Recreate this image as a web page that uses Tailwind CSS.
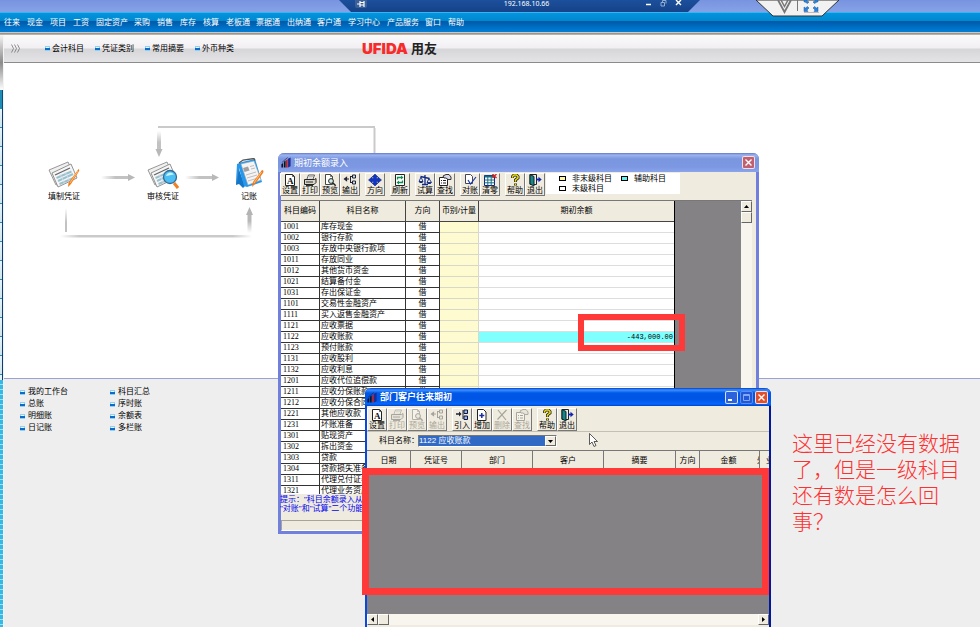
<!DOCTYPE html>
<html lang="zh-CN">
<head>
<meta charset="utf-8">
<title>UFIDA 用友 - 期初余额录入</title>
<script src="https://cdn.jsdelivr.net/npm/@tailwindcss/browser@4"></script>
</head>
<body class="font-['Liberation_Sans','Noto_Sans_CJK_SC',sans-serif] text-[8px] leading-[10px] text-black">
<svg class="absolute size-0" aria-hidden="true">
  <defs>
    <symbol id="i-set" viewBox="0 0 14 12"><path d="M2.500 .5h7l2 2v9h-9z" fill="#fff" stroke="#222"/><path d="M9.500 .5v2h2" fill="none" stroke="#222" stroke-width=".7"/><text x="4" y="10" font-family="Liberation Serif" font-weight="bold" font-size="9" fill="#111">A</text></symbol>
    <symbol id="i-print" viewBox="0 0 14 12"><path d="M4 5l1.500-4h6L10 5" fill="#fff" stroke="#333" stroke-width=".8"/><path d="M1.500 5.500h10l1.500-1v4l-2 2h-9.500z" fill="#d8d4c8" stroke="#222"/><path d="M3 8h7M3 11.500h7" stroke="#333"/><path d="M6 2.500h4M5.500 4h4" stroke="#888" stroke-width=".6"/></symbol>
    <symbol id="i-view" viewBox="0 0 14 12"><path d="M2.500 .5h5l2 2v8h-7z" fill="#fff" stroke="#333" stroke-width=".9"/><path d="M7.500 .5v2h2" fill="none" stroke="#333" stroke-width=".7"/><circle cx="8" cy="7" r="2.400" fill="#cdeee8" stroke="#222"/><path d="M9.700 8.700l3 3" stroke="#222" stroke-width="1.500"/></symbol>
    <symbol id="i-out" viewBox="0 0 14 12"><path d="M1 5h5M1.500 5l2-1.500v3z" fill="#223" stroke="#223" stroke-width="1.200"/><path d="M7.500 2v7M7 2.500h2M7 8.500h2" stroke="#223"/><path d="M9.500 1h3v3h-3zM9.500 7h3v3h-3z" fill="#cde" stroke="#223"/></symbol>
    <symbol id="i-dir" viewBox="0 0 14 12"><path d="M7 0l3 3H8.500v1.500H10V3l3.500 3L10 9V7.500H8.500V9H10l-3 3-3-3h1.500V7.500H4V9L.5 6 4 3v1.500h1.500V3H4z" fill="#1036c8" stroke="#0a1c70" stroke-width=".5"/></symbol>
    <symbol id="i-ref" viewBox="0 0 14 12"><path d="M2.500 .5h9v11h-9z" fill="#fff" stroke="#222"/><path d="M4.500 5.500V3.500h4M9.500 6.500v2h-4" fill="none" stroke="#0a9050" stroke-width="1.300"/><path d="M8 1.500l2.500 2L8 5.500zM6 6.500l-2.500 2 2.500 2z" fill="#0a9050"/></symbol>
    <symbol id="i-bal" viewBox="0 0 14 12"><path d="M7 1v9M2.500 2.500l9 2M4 10.500h6" stroke="#102a88" stroke-width="1.300"/><path d="M3 3L1 7.500h4zM11 4.500l-2 4h4.500z" fill="none" stroke="#102a88" stroke-width=".9"/><path d="M.8 7.500h4.500l-1 1.500h-2.500zM8.800 8.500h4.700l-1 1.500h-2.700z" fill="#102a88"/></symbol>
    <symbol id="i-find" viewBox="0 0 14 12"><path d="M1.500 3.500h8v8h-8z" fill="#fff" stroke="#222"/><path d="M3 6.500h1M5 6.500h3M3 9h1M5 9h3" stroke="#222"/><path d="M5 2l3-1.500h3L13 3v2.500h-3L8 4H6z" fill="#d8d8e8" stroke="#222" stroke-width=".9"/></symbol>
    <symbol id="i-chk" viewBox="0 0 14 12"><path d="M2.500 .5h5l2 2v7h-7z" fill="#fff" stroke="#445"/><path d="M5 6l2.500 4L13 3" fill="none" stroke="#1d3aa8" stroke-width="1.200"/></symbol>
    <symbol id="i-zero" viewBox="0 0 14 12"><path d="M1.500 1.500h10v10h-10z" fill="#fff" stroke="#127"/><path d="M1.500 2.500h10" stroke="#146f86" stroke-width="2"/><path d="M1.500 6h10M1.500 8.800h10M4.800 3v8.500M8.200 3v8.500" stroke="#146f86" stroke-width="1"/><path d="M9.500 0l4 4M13.500 0l-4 4" stroke="#e02020" stroke-width="1.300"/></symbol>
    <symbol id="i-help" viewBox="0 0 14 12"><path d="M4.500 4V2.500L6 1h2.500L10 2.500V4L7.500 6v2M7.500 9.500v2" fill="none" stroke="#222" stroke-width="3"/><path d="M4.500 3.700V2.500L6 1h2.500L10 2.500V4L7.500 6v1.700M7.500 9.800v1.400" fill="none" stroke="#f0e000" stroke-width="1.500"/></symbol>
    <symbol id="i-exit" viewBox="0 0 14 12"><path d="M2 .5h6.500v10H2z" fill="#eee" stroke="#222"/><path d="M2 .5l4 2v9.500l-4-2z" fill="#16868a" stroke="#122"/><path d="M8 5.500h3" stroke="#1024b0" stroke-width="1.800"/><path d="M10.500 2.800l3.200 2.700-3.200 2.700z" fill="#1024b0"/></symbol>
    <symbol id="i-in" viewBox="0 0 14 12"><path d="M1 5h4" stroke="#223" stroke-width="1.500"/><path d="M4 2.500L6.500 5 4 7.500z" fill="#223"/><path d="M8 1v9" stroke="#223"/><path d="M9 1h3.500v3.500H9zM9 7h3.500v3.500H9z" fill="#9bd" stroke="#114"/></symbol>
    <symbol id="i-add" viewBox="0 0 14 12"><path d="M2.500 .5h6l2.500 2.500v8.500h-8.500z" fill="#fff" stroke="#222"/><path d="M6.800 4v5M4.300 6.500h5" stroke="#1a2ea0" stroke-width="1.500"/></symbol>
    <symbol id="i-del" viewBox="0 0 14 12"><path d="M3 1l8 10M11.500 1L2.500 10.500" stroke="#222" stroke-width="1.200"/></symbol>
    <symbol id="i-app" viewBox="0 0 12 12"><path d="M.5 8l2-1.500V12h-2zM3.500 5l2-1.500V12h-2z" fill="#111"/><path d="M6 3.500L8 2v10H6z" fill="#b02430"/><path d="M8.500 1.500L11.500 0v10.500l-3 1.500z" fill="#1d2a90"/><path d="M1 6l7-6" stroke="#223" stroke-width=".7"/></symbol>
    <symbol id="i-bul" viewBox="0 0 5 5"><path d="M0 0h5v5H0z" fill="#8fd0f4"/><path d="M0 2h5v2H0z" fill="#0a6cc4"/><path d="M1 1h3v1H1z" fill="#e8f8ff"/></symbol>
    <linearGradient id="gr" x1="0" x2="1"><stop offset="0" stop-color="#c2c2c2" stop-opacity="0"/><stop offset=".5" stop-color="#c2c2c2"/></linearGradient>
    <linearGradient id="gd" x1="0" x2="0" y1="0" y2="1"><stop offset="0" stop-color="#c2c2c2" stop-opacity="0"/><stop offset=".6" stop-color="#c2c2c2"/></linearGradient>
    <linearGradient id="gu" x1="0" x2="0" y1="1" y2="0"><stop offset="0" stop-color="#c2c2c2" stop-opacity="0"/><stop offset=".6" stop-color="#b8b8b8"/></linearGradient>
    <linearGradient id="ge" x1="0" x2="1"><stop offset="0" stop-color="#c8c8c8" stop-opacity="0"/><stop offset=".1" stop-color="#cacaca"/><stop offset=".9" stop-color="#cacaca"/><stop offset="1" stop-color="#c8c8c8" stop-opacity="0"/></linearGradient>
    <symbol id="n-paper" viewBox="0 0 32 28"><path d="M1 9L20 1l7 15-19 8z" fill="#f0f0f0" stroke="#8c8c8c" stroke-width=".9"/><path d="M4 12L23 3l6 14-19 9z" fill="#f6f6f6" stroke="#888" stroke-width=".9"/><path d="M7 14l15-7" stroke="#666" stroke-width="1.300"/><path d="M8.500 17l15-6.500M10 20l15-7M11.500 23l14-6" stroke="#9ac2ce" stroke-width="2"/><path d="M12 13l4.500 9M17 11l4.500 9" stroke="#dde" stroke-width=".8"/></symbol>
  </defs>
</svg>

<div class="relative flex h-screen flex-col overflow-hidden bg-white">
  <header class="h-3 shrink-0 bg-linear-to-b from-[#7894e0] to-[#86a2e6]"></header>

  <nav class="flex h-5 shrink-0 items-center border-t border-[#3ab4ec] bg-[linear-gradient(#0494e0_0,#0088cc_8px,#0058a8_8px,#0080d8_19px)] pl-1 text-white">
    <a href="#" class="w-[23px]">往来</a><a href="#" class="w-[23px]">现金</a><a href="#" class="w-[23px]">项目</a><a href="#" class="w-[23px]">工资</a><a href="#" class="w-[38px]">固定资产</a><a href="#" class="w-[23px]">采购</a><a href="#" class="w-[23px]">销售</a><a href="#" class="w-[23px]">库存</a><a href="#" class="w-[23px]">核算</a><a href="#" class="w-[30px]">老板通</a><a href="#" class="w-[31px]">票据通</a><a href="#" class="w-[30px]">出纳通</a><a href="#" class="w-[31px]">客户通</a><a href="#" class="w-[39px]">学习中心</a><a href="#" class="w-[38px]">产品服务</a><a href="#" class="w-[23px]">窗口</a><a href="#" class="w-[23px]">帮助</a>
  </nav>
  <div class="h-[3px] shrink-0 border-t border-[#c8c8c8] bg-linear-to-b from-[#8a8680] to-[#c8c0b4]"></div>

  <div class="flex min-h-0 flex-1">
    <aside class="flex w-1 shrink-0 flex-col border-r border-[#f4f4f4]">
      <div class="h-[55px] bg-linear-to-b from-[#f4f4f4] via-[#8c8c8c] to-white"></div>
      <div class="h-[19px] border-r border-[#0a4a80] bg-[#1f8cb4]"></div>
      <div class="h-[271px] border-r border-[#0a3c78] bg-[repeating-linear-gradient(#e4f4fa_0,#cfe4ea_18px,#2d86b8_18px,#2d86b8_19px)]"></div>
      <div class="flex-1 bg-[repeating-linear-gradient(#38b8e4_0,#38b8e4_4px,#98e4f8_4px,#98e4f8_5px)]"></div>
    </aside>

    <div class="flex min-w-0 flex-1 flex-col">
      <div class="flex h-7 shrink-0 items-center border-b border-[#8c8c8c] bg-[linear-gradient(#fafafa_0,#f2eff3_13px,#d6d5d7_14px,#e4e3e6_27px)]">
        <svg class="ml-[7px] h-[9px] w-[9px]" viewBox="0 0 9 9" fill="none" stroke="#777" stroke-width=".8"><path d="M.5 .5l2 4-2 4M3.500 .5l2 4-2 4M6.500 .5l2 4-2 4"/></svg>
        <div class="ml-[25px] flex">
          <a href="#" class="flex w-[50px] items-center gap-[2px] whitespace-nowrap"><svg class="h-[5px] w-[5px]"><use href="#i-bul"/></svg>会计科目</a>
          <a href="#" class="flex w-[50px] items-center gap-[2px] whitespace-nowrap"><svg class="h-[5px] w-[5px]"><use href="#i-bul"/></svg>凭证类别</a>
          <a href="#" class="flex w-[50px] items-center gap-[2px] whitespace-nowrap"><svg class="h-[5px] w-[5px]"><use href="#i-bul"/></svg>常用摘要</a>
          <a href="#" class="flex w-[50px] items-center gap-[2px] whitespace-nowrap"><svg class="h-[5px] w-[5px]"><use href="#i-bul"/></svg>外币种类</a>
        </div>
        <div class="ml-[117px] flex items-center gap-[3px] text-[#222]"><span class="font-['Inter',sans-serif] text-[15px] font-black text-[#f82a2a]">UFIDA</span><span class="text-[13px] font-bold">用友</span></div>
      </div>

      <section class="relative h-[315px] shrink-0 bg-white">
        <svg class="absolute top-0 left-0 h-[315px] w-[400px]" viewBox="4 63 400 315">
          <path d="M158 126h217v2H158z" fill="#cacaca"/><path d="M373.500 128h2v26h-2z" fill="#cacaca"/>
          <path d="M157 131h4v19h-4z" fill="url(#gd)"/><path d="M155.500 149h7l-3.500 8z" fill="#b8b8b8"/>
          <path d="M101 176h29v3h-29z" fill="url(#gr)"/><path d="M128 174l7 3.500-7 3.500z" fill="#b8b8b8"/>
          <path d="M185 176h29v3h-29z" fill="url(#gr)"/><path d="M212 174l7 3.500-7 3.500z" fill="#b8b8b8"/>
          <path d="M65 208h2v24h-2z" fill="url(#gd)"/><path d="M60 235h192v2.500H60z" fill="url(#ge)"/>
          <path d="M247.500 213h4v20h-4z" fill="url(#gu)"/><path d="M246 215h7l-3.500-8z" fill="#b4b4b4"/>
        </svg>
        <button class="absolute top-[98px] left-[40px] flex w-10 flex-col items-center whitespace-nowrap">
          <svg class="h-7 w-8" viewBox="0 0 32 28"><use href="#n-paper"/><path d="M30.500 8c1 1 1 1.500 0 3L23 23l-3 3 .5-4z" fill="#f47a18"/><path d="M30 10l-8 12" stroke="#ffc070"/></svg>
          <span class="mt-[3px]">填制凭证</span></button>
        <button class="absolute top-[98px] left-[139px] flex w-10 flex-col items-center whitespace-nowrap">
          <svg class="h-7 w-8" viewBox="0 0 32 28"><use href="#n-paper"/><path d="M27 22l4 5" stroke="#f08020" stroke-width="3"/><circle cx="23" cy="16" r="6.500" fill="#4cc0f4" stroke="#336a94" stroke-width="1.300"/><path d="M19 15c1-4 6-5 8-1-3-1-5 1-8 1z" fill="#c8f2ff"/></svg>
          <span class="mt-[3px]">审核凭证</span></button>
        <button class="absolute top-[95px] left-[225px] flex w-10 flex-col items-center whitespace-nowrap">
          <svg class="h-[31px] w-8" viewBox="0 0 32 31"><path d="M4 6L3 27l3-1 4 4 2-2z" fill="#1476c8"/><path d="M4 6L9 4l13-3 1 3 6 20-15 5-3-1L6 10 4 24z" fill="#2498ec"/><path d="M8 6l13-3 7 19-13 5z" fill="#f4f4f4" stroke="#aaa" stroke-width=".6"/><path d="M10 10l5-1.500 1.500 4-5 1.500z" fill="#a0a0a0"/><path d="M17 8.500l4-1M18 11l4-1M13 17l10-3M14 20l10-3M15 23l10-3" stroke="#b8b8b8" stroke-width=".9"/><path d="M6 5l4-3 11-1.500 1 2" fill="none" stroke="#555" stroke-width="1.300"/><path d="M29 12c2 .5 1.500 2 1 3l-8 11-3 3 1-5z" fill="#f47a18"/><path d="M28.500 14L21 25" stroke="#ffc070"/></svg>
          <span class="mt-[3px]">记账</span></button>
      </section>

      <section class="flex-1 border-t border-[#9aa2d4] bg-[#eee] pt-[7px] pl-4">
        <ul class="grid w-[180px] grid-cols-2 [&_a]:flex [&_a]:h-3 [&_a]:items-center [&_a]:gap-[3px] [&_svg]:h-[5px] [&_svg]:w-[5px]">
          <li><a href="#"><svg><use href="#i-bul"/></svg>我的工作台</a></li><li><a href="#"><svg><use href="#i-bul"/></svg>科目汇总</a></li>
          <li><a href="#"><svg><use href="#i-bul"/></svg>总账</a></li><li><a href="#"><svg><use href="#i-bul"/></svg>序时账</a></li>
          <li><a href="#"><svg><use href="#i-bul"/></svg>明细账</a></li><li><a href="#"><svg><use href="#i-bul"/></svg>余额表</a></li>
          <li><a href="#"><svg><use href="#i-bul"/></svg>日记账</a></li><li><a href="#"><svg><use href="#i-bul"/></svg>多栏账</a></li>
        </ul>
      </section>
    </div>
  </div>

  <!-- Remote desktop bar -->
  <div class="absolute top-0 left-[339px] flex h-3 w-[361px] items-start justify-between bg-linear-to-b from-[#1c509c] to-[#164288] pr-[18px] pl-4 text-white [clip-path:polygon(0_0,100%_0,349px_100%,12px_100%)]">
    <button aria-label="固定" class="h-2 w-3 rounded-b-xs bg-[#3c6098]"><svg class="h-[7px] w-3" viewBox="0 0 12 7"><path d="M2 3h3M5 0v6M5 1.500h4M5 4h4M9 0v6" stroke="#fff" fill="none" stroke-width="1.200"/></svg></button>
    <span class="ml-[42px] font-['Noto_Sans',sans-serif] text-[7px] leading-[7px]">192.168.10.66</span>
    <svg class="h-2 w-[38px]" viewBox="0 0 38 8" fill="none" stroke="#fff"><path d="M2 4.500h5" stroke-width="1.500"/><path d="M17 2.500h3.500V6H17zM18.500 2V.5H22v3" stroke="#9fb6d8" stroke-width=".9"/><path d="M32 0l5 5M37 0l-5 5" stroke-width="1.400"/></svg>
  </div>
  <svg class="absolute top-0 left-[755px] h-[17px] w-[85px]" viewBox="0 0 85 17"><path d="M1 0l17 16h49L84 0z" fill="#f2f2f2" stroke="#333"/><path d="M23 0l6.500 12L36 0" fill="none" stroke="#777" stroke-width="1.800"/><path d="M26 0l3.500 6.500L33 0" fill="none" stroke="#777" stroke-width="1.500"/><path d="M42.500 0v11" stroke="#777"/><path d="M49 12.500h15" stroke="#bbb"/><g fill="#2f82d8" stroke="#1b5ca8" stroke-width=".5"><path d="M49 0h3v1l2 1-1.500 1.500L50 2h-1zM63 0h-3v1l-2 1 1.500 1.500L62 2h1zM49 11.500V7l1.500 1 2-1.500L54 8l-2 2 1 1.500zM63 11.500V7l-1.500 1-2-1.500L58 8l2 2-1 1.500z"/></g></svg>

  <!-- Opening balance window -->
  <section class="absolute top-[153px] left-[278px] flex w-[481px] flex-col rounded-t-md border-x-3 border-b-3 border-[#7080dc] bg-[#efebde]">
    <div class="-mx-[3px] flex h-[19px] items-center gap-[3px] rounded-t-md bg-[linear-gradient(#6078cc_0,#9cb4f0_2px,#7a96df_6px,#7c98e2_14px,#8aa4ea_19px)] pr-1 pl-[3px] text-white">
      <svg class="h-[11px] w-[10px]"><use href="#i-app"/></svg>
      <h2 class="flex-1 text-[9px]">期初余额录入</h2>
      <button aria-label="关闭" class="flex h-[13px] w-[13px] items-center justify-center rounded-xs border border-white/80 bg-[#c06070]"><svg class="h-[7px] w-[7px]" viewBox="0 0 7 7"><path d="M.5 .5l6 6M6.500 .5l-6 6" stroke="#fff" stroke-width="1.400"/></svg></button>
    </div>
    <div class="-ml-[1px] flex h-7 items-start gap-[5px] pt-[1px]">
      <div class="flex gap-[5px]" data-bar="设置:set,打印:print,预览:view,输出:out|方向:dir|刷新:ref|试算:bal,查找:find|对账:chk,清零:zero|帮助:help,退出:exit"></div>
      <div class="-ml-1 grid h-[21px] w-[134px] grid-cols-[62px_1fr] content-center bg-white pl-[13px]">
        <span class="flex items-center gap-[6px]"><i class="h-[5px] w-[7px] border border-black bg-[#fff6a8]"></i>非末级科目</span>
        <span class="flex items-center gap-[6px]"><i class="h-[5px] w-[7px] border border-black bg-[#60f0f0]"></i>辅助科目</span>
        <span class="flex items-center gap-[6px]"><i class="h-[5px] w-[7px] border border-black bg-white"></i>末级科目</span>
      </div>
    </div>
    <div class="mr-1 flex h-[294px] overflow-hidden border-t border-[#777] bg-[#848284]">
      <table class="w-[394px] shrink-0 table-fixed border-separate border-spacing-0 border-r border-black">
        <colgroup><col class="w-[39px]"><col class="w-[86px]"><col class="w-[34px]"><col class="w-[39px]"><col></colgroup>
        <thead><tr class="h-[21px] bg-[#efebde] [&>th]:border-b [&>th]:border-[#444] [&>th]:p-0 [&>th]:font-normal [&>th]:whitespace-nowrap"><th class="border-r">科目编码</th><th class="border-r">科目名称</th><th class="border-r">方向</th><th class="border-r">币别/计量</th><th>期初余额</th></tr></thead>
        <tbody id="rows"></tbody>
      </table>
      <div class="flex-1"></div>
      <div class="flex w-[11px] flex-col bg-[#f7f5ee]">
        <button aria-label="向上" class="flex h-[11px] items-center justify-center border border-[#fff] border-r-[#666] border-b-[#666] bg-[#efebde]"><svg class="h-[3px] w-[5px]" viewBox="0 0 5 3"><path d="M0 3h5L2.500 0z"/></svg></button>
        <div class="h-[11px] border border-[#fff] border-r-[#666] border-b-[#666] bg-[#efebde]"></div>
      </div>
    </div>
    <p class="-ml-[1px] h-[26px] pt-[1px] leading-[9px] whitespace-nowrap text-[#0000f0]">提示："科目余额录入从<br>"对账"和"试算"二个功能</p>
    <div class="h-[11px] border border-[#a8a498] border-r-white border-b-white"></div>
  </section>

  <!-- Customer opening balance window -->
  <section class="absolute top-[388px] left-[365px] flex w-[406px] flex-col rounded-t-md border-x-2 border-[#0848e0] border-r-[#0018a0] bg-[#efebde]">
    <div class="-mx-[2px] flex h-[18px] items-center gap-[3px] rounded-t-md bg-[linear-gradient(#0040c8_0,#3c90ff_2px,#0058e8_5px,#0054e4_11px,#0468fc_16px,#0040c8_18px)] pr-[3px] pl-[2px] text-white">
      <svg class="h-[11px] w-[10px]"><use href="#i-app"/></svg>
      <h2 class="flex-1 text-[9px] font-bold">部门客户往来期初</h2>
      <div class="flex gap-[2px]">
        <button aria-label="最小化" class="h-[13px] w-[13px] rounded-xs border border-white/80 bg-[#2c62dc] p-[2px]"><svg class="h-[7px] w-[7px]" viewBox="0 0 7 7"><path d="M0 6h4" stroke="#fff" stroke-width="2"/></svg></button>
        <button aria-label="最大化" class="h-[13px] w-[13px] rounded-xs border border-[#5c8cf0] bg-[#2258d8] p-[2px]"><svg class="h-[7px] w-[7px]" viewBox="0 0 7 7"><path d="M.5 .5h6v6h-6zM.5 1.500h6" fill="none" stroke="#84a8f4"/></svg></button>
        <button aria-label="关闭" class="h-[13px] w-[13px] rounded-xs border border-white/80 bg-[#e0502c] p-[2px]"><svg class="h-[7px] w-[7px]" viewBox="0 0 7 7"><path d="M.5 .5l6 6M6.500 .5l-6 6" stroke="#fff" stroke-width="1.400"/></svg></button>
      </div>
    </div>
    <div class="flex h-[26px] items-start border-b border-[#c4c0b4] pt-[2px]">
      <div class="flex gap-[5px]" data-bar="设置:set,打印:print:off,预览:view:off,输出:out:off|引入:in,增加:add,删除:del:off,查找:find:off|帮助:help,退出:exit"></div>
    </div>
    <div class="flex h-[18px] items-center pl-3">
      <label for="subject" class="w-[39px] whitespace-nowrap">科目名称：</label>
      <div class="relative h-3 w-[139px] border border-[#777] border-r-white border-b-white bg-white">
        <select id="subject" class="block h-[10px] w-[126px] appearance-none bg-[#316ac5] text-[8px] leading-[10px] text-white"><option>1122 应收账款</option></select>
        <span class="pointer-events-none absolute top-0 right-0 flex h-[10px] w-[11px] items-center justify-center border border-white border-r-[#666] border-b-[#666] bg-[#efebde]"><svg class="h-[3px] w-[5px]" viewBox="0 0 5 3"><path d="M0 0h5L2.500 3z"/></svg></span>
      </div>
    </div>
    <table class="w-full table-fixed border-separate border-spacing-0">
      <colgroup><col class="w-[44px]"><col class="w-[51px]"><col class="w-[71px]"><col class="w-[71px]"><col class="w-[72px]"><col class="w-[24px]"><col class="w-[57px]"><col class="w-[3px]"><col></colgroup>
      <thead><tr class="h-5 [&>th]:overflow-hidden [&>th]:border-t [&>th]:border-[#777] [&>th]:p-0 [&>th]:font-normal [&>th]:whitespace-nowrap"><th class="border-r">日期</th><th class="border-r">凭证号</th><th class="border-r">部门</th><th class="border-r">客户</th><th class="border-r">摘要</th><th class="border-r">方向</th><th>金额</th><th class="border-r text-left">外</th><th><span class="block pl-[6px] text-left">业</span></th></tr></thead>
    </table>
    <div class="h-36 bg-[#848284]"></div>
    <div class="flex h-[11px] bg-[#f7f5ee]">
      <button aria-label="向左" class="flex w-[11px] items-center justify-center border border-white border-r-[#666] border-b-[#666] bg-[#efebde]"><svg class="h-[5px] w-[3px]" viewBox="0 0 3 5"><path d="M3 0v5L0 2.500z"/></svg></button>
      <div class="w-[11px] border border-white border-r-[#666] border-b-[#666] bg-[#efebde]"></div>
      <div class="flex-1"></div>
      <button aria-label="向右" class="flex w-[11px] items-center justify-center border border-white border-r-[#666] border-b-[#666] bg-[#efebde]"><svg class="h-[5px] w-[3px]" viewBox="0 0 3 5"><path d="M0 0v5l3-2.500z"/></svg></button>
    </div>
    <div class="h-1"></div>
  </section>

  <!-- Annotations -->
  <div class="absolute top-[314px] left-[578px] h-[37px] w-[107px] border-6 border-[#ff3838]"></div>
  <div class="absolute top-[468px] left-[362px] h-[127px] w-[407px] border-7 border-[#ff3838]"></div>
  <svg class="absolute top-[433px] left-[589px] h-[15px] w-[9px]" viewBox="0 0 9 15"><path d="M.5 .5v11l2.500-2.500 2 4.500 2-1-2-4h3.500z" fill="#fff" stroke="#333" stroke-width=".8"/></svg>
  <p class="absolute top-[429px] left-[792px] w-[175px] font-['Noto_Sans_CJK_SC',sans-serif] text-[21px] leading-[26px] font-light text-[#ff3030]">这里已经没有数据了，但是一级科目还有数是怎么回事？</p>
</div>

<script>
document.querySelectorAll('[data-bar]').forEach(bar => {
  bar.innerHTML = bar.dataset.bar.split('|').map(group => '<div class="flex">' + group.split(',').map(item => {
    const [label, icon, off] = item.split(':');
    return `<button ${off ? 'disabled' : ''} class="flex h-[23px] w-5 flex-col items-center justify-between overflow-hidden border border-white border-r-[#777] border-b-[#777] whitespace-nowrap disabled:text-[#aaa69a]"><svg class="h-3 w-[14px] shrink-0 ${off ? 'opacity-35 grayscale' : ''}"><use href="#i-${icon}"/></svg><span class="leading-[9px]">${label}</span></button>`;
  }).join('') + '</div>').join('');
});
const accounts = [['1001','库存现金'],['1002','银行存款'],['1003','存放中央银行款项'],['1011','存放同业'],['1012','其他货币资金'],['1021','结算备付金'],['1031','存出保证金'],['1101','交易性金融资产'],['1111','买入返售金融资产'],['1121','应收票据'],['1122','应收账款','-443,000.00'],['1123','预付账款'],['1131','应收股利'],['1132','应收利息'],['1201','应收代位追偿款'],['1211','应收分保账款'],['1212','应收分保合同准备金'],['1221','其他应收款'],['1231','坏账准备'],['1301','贴现资产'],['1302','拆出资金'],['1303','贷款'],['1304','贷款损失准备'],['1311','代理兑付证券'],['1321','代理业务资产']];
document.getElementById('rows').innerHTML = accounts.map(([code, name, amount]) => `<tr class="h-[11px] bg-white leading-[10px] [&>td]:border-b [&>td]:py-0 [&>td]:whitespace-nowrap"><td class="border-r border-[#333] px-[2px] font-['Liberation_Serif',serif]">${code}</td><td class="border-r border-[#333] px-[1px]">${name}</td><td class="border-r border-[#333] px-0 text-center">借</td><td class="border-r border-[#d8d8c8] bg-[#fffbd0] p-0"></td><td class="border-[#ddd] px-[1px] text-right font-['Liberation_Mono',monospace] text-[7px] ${amount ? 'bg-[#80ffff]' : ''}">${amount || ''}</td></tr>`).join('');
</script>
</body>
</html>
